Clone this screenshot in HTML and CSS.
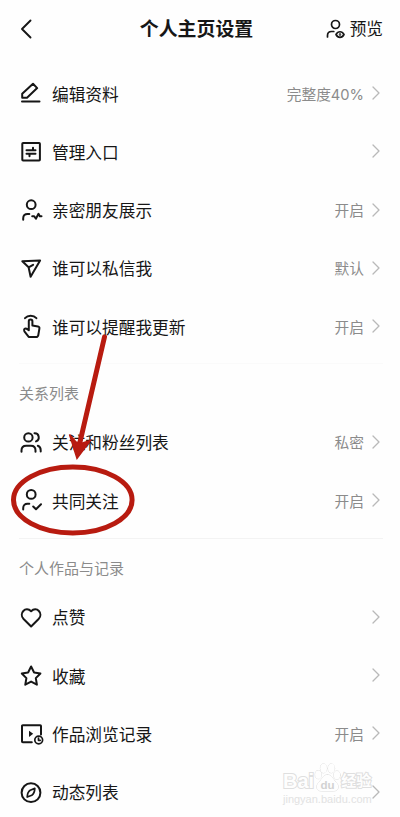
FILE: index.html
```html
<!DOCTYPE html>
<html lang="zh-CN">
<head>
<meta charset="utf-8">
<title>个人主页设置</title>
<link rel="stylesheet" href="styles.css">
</head>
<body>
<svg class="defs" width="0" height="0"><symbol id="chev" viewBox="0 0 8 14"><path d="M1 1l6 6-6 6"/></symbol></svg>
<div class="screen">
  <header class="header">
    <svg class="back" viewBox="0 0 12 20"><path d="M10.500 1.500L2 10l8.500 8.500"/></svg>
    <h1 class="title">个人主页设置</h1>
    <div class="preview">
      <svg class="icon-preview" viewBox="0 0 20 20"><circle cx="9.500" cy="5.500" r="4"/><path d="M1.500 18v-1.500c0-2.500 1.500-4 4-4h2.300"/><path d="M10 15.500c2-3.700 6-3.700 8 0-2 3.700-6 3.700-8 0z"/><circle cx="14" cy="15.500" r=".4"/></svg>
      <span>预览</span>
    </div>
  </header>
  <main>
    <section class="group">
      <div class="row"><svg class="icon" viewBox="0 0 24 24"><path d="M3.200 15.700v-3.900L14 1.800l4.200 4.300L8 15.700zM3 19.600h17.500"/></svg><span class="label">编辑资料</span><span class="value">完整度40%</span><svg class="chev"><use href="#chev"/></svg></div>
      <div class="row"><svg class="icon" viewBox="0 0 24 24"><rect x="3.300" y="3" width="17.600" height="17.600" rx=".8"/><path d="M7.500 10.200h9M14 10V7.800M7.500 13.700h9M10.500 14v2.200"/></svg><span class="label">管理入口</span><svg class="chev"><use href="#chev"/></svg></div>
      <div class="row"><svg class="icon" viewBox="0 0 24 24"><circle cx="12.200" cy="5.700" r="4.400"/><path d="M4.200 20.700v-1.500c0-2.600 1.700-4.300 4.300-4.300h1.800M13.200 17.300h2l1.700 2.500 2.600-5 1.300 2.500h1.700"/></svg><span class="label">亲密朋友展示</span><span class="value">开启</span><svg class="chev"><use href="#chev"/></svg></div>
      <div class="row"><svg class="icon" viewBox="0 0 24 24"><path d="M3.300 4.300l17.800-.8-9.500 16.200-2-9.400zM9.600 10.300l4.500-2.500"/></svg><span class="label">谁可以私信我</span><span class="value">默认</span><svg class="chev"><use href="#chev"/></svg></div>
      <div class="row"><svg class="icon" viewBox="0 0 24 24"><path d="M6 3.200c2.900-3.300 8.500-3.300 11.400 0M9.800 13V6.300c0-2.400 3.600-2.400 3.600 0v4.200l5.500.9c1.300.3 1.700 1 1.500 2.200l-1.200 7.100-1 1.200H9.700l-4.300-5.600c-1-2 .5-3.200 2-2.700l2.400 1.600z"/></svg><span class="label">谁可以提醒我更新</span><span class="value">开启</span><svg class="chev"><use href="#chev"/></svg></div>
    </section>
    <h2 class="heading faint">关系列表</h2>
    <section class="group">
      <div class="row"><svg class="icon" viewBox="0 0 24 24"><circle cx="9.400" cy="6.400" r="4.200"/><path d="M2.500 20.800v-1.300c0-3 1.700-4.700 4.700-4.700h4.700c3 0 4.600 1.700 4.600 4.700v1.300M15.500 2.300c4.700-.2 5.900 6.200 1.500 8.100M18.800 14.700c1.900.6 2.900 2.100 2.900 4.500v1.400"/></svg><span class="label">关注和粉丝列表</span><span class="value">私密</span><svg class="chev"><use href="#chev"/></svg></div>
      <div class="row"><svg class="icon" viewBox="0 0 24 24"><circle cx="12.200" cy="5.400" r="4.400"/><path d="M4.200 20.500V19c0-2.600 1.700-4.300 4.300-4.300h1.800M14.200 17.500l2.800 2.800 5-5"/></svg><span class="label">共同关注</span><span class="value">开启</span><svg class="chev"><use href="#chev"/></svg></div>
    </section>
    <h2 class="heading">个人作品与记录</h2>
    <section class="group">
      <div class="row"><svg class="icon" viewBox="0 0 24 24"><path d="M12.100 20.500L4.600 13C-.6 7.500 6.600-.2 12.100 5.200 17.600-.2 24.800 7.500 19.600 13z"/></svg><span class="label">点赞</span><svg class="chev"><use href="#chev"/></svg></div>
      <div class="row"><svg class="icon" viewBox="0 0 24 24"><path d="M12.100 2.500l3 6 6.300 1-4.600 4.600 1.100 6.600-5.800-3.100-5.800 3.100 1.100-6.600L2.800 9.500l6.300-1z"/></svg><span class="label">收藏</span><svg class="chev"><use href="#chev"/></svg></div>
      <div class="row"><svg class="icon" viewBox="0 0 24 24"><path d="M12.800 20.200h-9a.8.8 0 0 1-.8-.8V4a.8.8 0 0 1 .8-.8h17.400a.8.8 0 0 1 .8.8v8.500"/><path class="solid" d="M10 8.700v6.200l4.200-3.100z"/><circle class="thin" cx="19.700" cy="18" r="3.900"/><path class="thin" d="M19.500 16v2.300h1.700"/></svg><span class="label">作品浏览记录</span><span class="value">开启</span><svg class="chev"><use href="#chev"/></svg></div>
      <div class="row"><svg class="icon" viewBox="0 0 24 24"><circle cx="12" cy="11.700" r="9.400"/><path class="thin" d="M8.200 16c.1-3.200 1-5.500 3-6.800l4.600-1.800c-.1 3.200-1 5.500-3 6.800z"/></svg><span class="label">动态列表</span><svg class="chev"><use href="#chev"/></svg></div>
    </section>
  </main>
  <svg class="marks" viewBox="0 0 400 817">
    <ellipse cx="72.800" cy="500" rx="59.300" ry="33"/>
    <path class="shaft" d="M104.500 337L80 442"/>
    <path class="head" d="M69.500 434.500l7.500 24 13.500-18-9.500 3-5-1.500z"/>
  </svg>
  <div class="watermark">
    <div class="brand"><span>Bai</span>
      <svg class="paw" viewBox="0 0 28 31"><ellipse cx="4.500" cy="12" rx="3.300" ry="4.300"/><ellipse cx="10" cy="5.500" rx="3.400" ry="4.700"/><ellipse cx="18" cy="5.500" rx="3.400" ry="4.700"/><ellipse cx="23.800" cy="12.500" rx="3.300" ry="4.300"/><path d="M14 12c4 0 5.500 4.500 9 8 4 4.500 2 9-2.500 9h-13C3 29 1 24.500 5 20c3.500-3.500 5-8 9-8z"/><text x="14" y="26.500" text-anchor="middle">du</text></svg>
      <span class="cn">经验</span></div>
    <div class="url">jingyan.baidu.com</div>
  </div>
</div>
</body>
</html>
```

FILE: styles.css
```css
* { box-sizing: border-box; }

body {
  margin: 0;
  background: #fefefe;
  color: #161616;
  font-family: "Noto Sans CJK SC", "Noto Sans", sans-serif;
}

.defs { position: absolute; }

.screen {
  position: relative;
  width: 400px;
  height: 817px;
  overflow: hidden;
}

svg {
  fill: none;
  stroke: #161616;
  stroke-linecap: round;
  stroke-linejoin: round;
}

.header {
  display: grid;
  grid-template-columns: 1fr auto 1fr;
  align-items: center;
  height: 57px;
  margin-bottom: 8px;
  padding: 0 17px 0 20px;
}

.back { width: 12px; height: 20px; stroke-width: 1.900; }

.title {
  margin: 0 0 1px -10px;
  font-size: 18.900px;
  font-weight: 700;
  line-height: 28px;
}

.preview {
  display: flex;
  justify-content: flex-end;
  align-items: center;
  gap: 4px;
  font-size: 16.700px;
  line-height: 24px;
}

.icon-preview { width: 20px; height: 20px; stroke-width: 1.700; }

.preview span { margin-bottom: 1px; }

.group { padding: 0 20px 0 19px; }

.row {
  display: flex;
  align-items: center;
  height: 58.250px;
}

.icon {
  width: 24px;
  height: 24px;
  margin: 0 9px 0 0;
  stroke-width: 2;
  overflow: visible;
}

.icon .solid { fill: #161616; stroke: none; }
.icon .thin { stroke-width: 1.700; }

.label {
  flex: 1;
  margin-bottom: 1px;
  font-size: 16.700px;
  line-height: 24px;
}

.value {
  margin: 1px 8px 0 0;
  color: #8b8b8b;
  font-family: Inter, "Noto Sans CJK SC", sans-serif;
  font-size: 14.700px;
  line-height: 22px;
}

.chev {
  width: 8px;
  height: 14px;
  margin-bottom: 2px;
  stroke: #b9b9b9;
  stroke-width: 1.300;
}

.heading {
  height: 50.500px;
  margin: 7px 17px 0 19px;
  padding-top: 17px;
  border-top: 1px solid #f3f3f3;
  color: #8b8b8b;
  font-size: 15px;
  font-weight: 400;
  line-height: 24px;
}

.group + .heading:not(.faint) { margin-top: 8px; }

.heading.faint { border-color: #fafafa; }

.marks {
  position: absolute;
  inset: 0;
  width: 400px;
  height: 817px;
  stroke: #b81b10;
  stroke-width: 5;
}

.marks .head { fill: #b81b10; stroke-width: 1.500; stroke-linejoin: miter; }

.watermark {
  position: absolute;
  left: 283px;
  top: 762px;
  width: 92px;
  color: #fefefe;
  font-family: "Liberation Sans", "Noto Sans CJK SC", sans-serif;
  -webkit-text-stroke: 2px #dfdfdf;
  paint-order: stroke fill;
}

.brand {
  display: flex;
  align-items: flex-end;
  height: 31px;
  font-size: 20px;
  font-weight: 700;
  line-height: 24px;
}

.paw {
  width: 27px;
  height: 30px;
  fill: #fefefe;
  stroke: #dddddd;
  stroke-width: 1;
}

.paw text { font-size: 12px; fill: #d2d2d2; stroke: none; -webkit-text-stroke: 0; }

.cn { font-size: 15px; }

.url {
  color: #e2e2e2;
  font-size: 11px;
  line-height: 13px;
  -webkit-text-stroke: 0;
}
```
